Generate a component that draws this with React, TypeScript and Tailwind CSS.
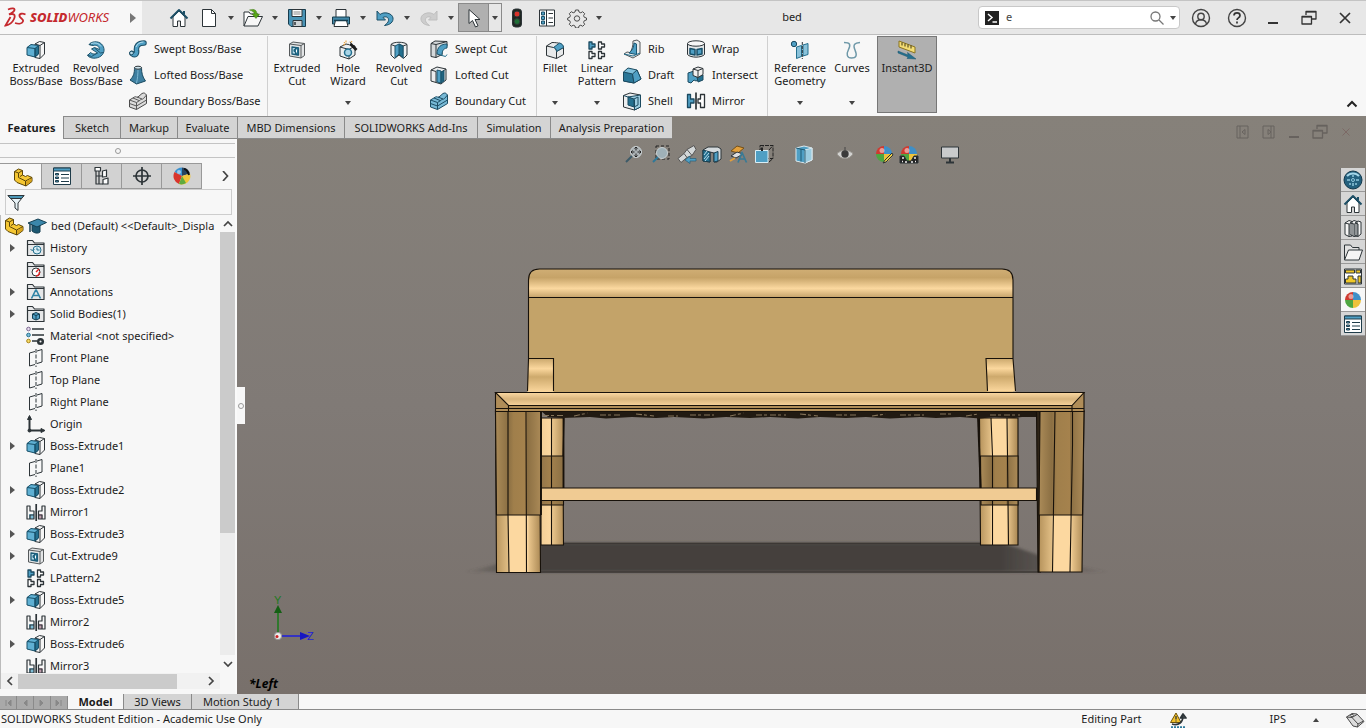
import type { ReactNode } from 'react';

const INK = '#2d3438';
const BLUE = '#4f9fc4';
const DEEP = '#24708f';

function Svg({ children, className = 'size-5', box = 20 }: { children: ReactNode; className?: string; box?: number }) {
  return (
    <svg
      viewBox={`0 0 ${box} ${box}`}
      className={`shrink-0 ${className}`}
      fill="none"
      stroke={INK}
      strokeWidth="1"
      strokeLinejoin="round"
      aria-hidden="true"
    >
      {children}
    </svg>
  );
}

/* ---------- feature icons ---------- */

const BossIcon = () => (
  <Svg>
    <path d="M9 4l4.5-2.5 5 1V14L14 18.500l-5-1z" fill="#f6f6f6" />
    <path d="M14 18.5V5.500l4.500-3M14 5.500L9 4" />
    <path d="M1 7.500l4-3 7.500 1V14L9 17l-8-2z" fill="#5fb0d3" stroke="#174f68" />
    <path d="M9 8.500l3.500-3V14L9 17z" fill={DEEP} stroke="#174f68" />
    <path d="M1 7.500l8 1V17" stroke="#174f68" />
  </Svg>
);

const CutIcon = () => (
  <Svg>
    <path d="M2.500 4L6 2l11.500 1.500v12L14 18 2.500 16z" fill="#e3e5e6" stroke="#55595b" />
    <path d="M2.500 4L14 5.500V18M14 5.500l3.500-2" stroke="#55595b" />
    <path d="M5 7l6.500 1v7L5 14z" fill="#b9dcea" stroke="#1c5c78" strokeWidth="1.300" />
    <path d="M8.500 7.500l3 .5v7l-3-.5V12L7 11.500V9.500l1.500.3z" fill={DEEP} stroke="#1c5c78" />
    <path d="M9.500 9.500v3" stroke="#fff" />
  </Svg>
);

const RevolveIcon = () => (
  <Svg>
    <path
      d="M3 4.500C5 1.500 12 .5 15.500 4s3.500 9-.5 12-10.500 3-13.500-.5l3-3c2 2 5 2 7 .5l-6-4 3-1.500 5 2c0-3-3-5-6-4z"
      fill={BLUE}
      stroke="#21566e"
    />
    <path d="M3 4.500l4.500 1M8.500 8l6 5 3-.5M1.500 15l4 1.500 6-3.500" stroke="#21566e" />
    <path d="M5 4c3-2 8-1 10 2.500" stroke="#b8e0ef" />
  </Svg>
);

const SweptIcon = () => (
  <Svg>
    <path
      d="M4 14.500c4 3 5 0 4.500-3C8 7 10 4 16 4"
      stroke="#1d4f66"
      strokeWidth="5.500"
      strokeLinecap="round"
    />
    <path d="M4 14.500c4 3 5 0 4.500-3C8 7 10 4 16 4" stroke={BLUE} strokeWidth="3.500" strokeLinecap="round" />
    <path d="M8 8c1-3 4-5 7.500-5" stroke="#b5dcec" />
    <ellipse cx="3.500" cy="14" rx="2" ry="1.700" fill="#b9dceb" stroke="#1d4f66" />
  </Svg>
);

const LoftIcon = () => (
  <Svg>
    <path d="M6.500 2.500c0 6-1 9-4.500 12.500l6.500 4 9-3c-3-4-4-8-4-13.500z" fill="#3e7fa0" stroke="#1b4a60" />
    <path d="M8.500 18c1-4 1.500-9 1.500-14" stroke="#7db9d3" />
    <ellipse cx="10" cy="2.700" rx="3.500" ry="1.500" fill="#cfe6ef" />
  </Svg>
);

const BoundaryIcon = ({ blue = false }: { blue?: boolean }) => (
  <Svg>
    <path
      d="M1.500 9l5-3c2-1 2 1 3.500 0l4-3.500c2-1 3-.5 4.500 1.500v8.500l-10 6-7-2.500z"
      fill={blue ? '#77b9d6' : '#dcdcdc'}
      stroke={blue ? '#1c4d64' : '#4a4a4a'}
    />
    <path
      d="M1.500 9l7 2.500v7M8.500 11.500l4-2.500c1-2 2 0 3-1.500l3-3.500M5 7l6 2.500M9 6l5 2M1.500 12.500L8.500 15l10-6"
      stroke={blue ? '#1c4d64' : '#5a5a5a'}
    />
  </Svg>
);

const HoleIcon = () => (
  <Svg>
    <path d="M2 7l6-3 9 2v9l-6 4-9-3z" fill="#eceff0" />
    <path d="M2 7l9 2.500V19M11 9.500L17 6" />
    <circle cx="10" cy="12.500" r="3.500" fill="#a9d5e7" stroke={DEEP} strokeWidth="1.500" />
    <path d="M11 2.500l7.500 7.500" stroke="#1c1c1c" strokeWidth="2.800" />
    <path d="M10.500 2.500L12 4" stroke="#fff" strokeWidth="2" />
    <path d="M6 2l1 1.500M8 .5v2M14 1l-1 1.500M5 5l2-.5" stroke="#e59a2e" />
  </Svg>
);

const RevolvedCutIcon = () => (
  <Svg>
    <path d="M2 4.500C4 1.500 16 1.500 18 4.500V15l-3.500 3.500L10 15l-4.500 3.500L2 15z" fill="#eef0f1" />
    <path d="M6 6l4-2 4 2v12l-4-4-4 4z" fill={BLUE} stroke="#1d546c" />
    <path d="M10 4v10l4 4V6z" fill={DEEP} stroke="#1d546c" />
    <path d="M2 4.500L6 6M18 4.500L14 6" />
  </Svg>
);

const SweptCutIcon = () => (
  <Svg>
    <path d="M2 4.500L6 2l12 .5v5c-4 1-5 3-5 8L7 18.500l-5-1z" fill="#d5d9db" />
    <path d="M2 4.500l5 1v13M7 5.500L18 2.500" />
    <path d="M18 5c-6 0-10 3-10 10l5 1.500c0-4 1-7 5-7.500z" fill={BLUE} stroke="#1d546c" />
    <path d="M13 16.500l3.500 1 1.500-2" stroke={DEEP} />
  </Svg>
);

const LoftedCutIcon = () => (
  <Svg>
    <path d="M2 5l6-3 9 2v11l-5 4-10-3z" fill="#ebeced" />
    <path d="M2 5l5 1.500v11M12 19V7.500L17 4" />
    <path d="M8 5l4 1v12l-4-1z" fill={BLUE} stroke="#1d546c" />
    <path d="M12 7l3-1.500V16l-3 2z" fill="#1f6481" stroke="#1d546c" />
  </Svg>
);

const FilletIcon = () => (
  <Svg>
    <path d="M1.500 6L7 2.500c6 0 11 1 11.500 5v7l-7 4-10-3z" fill="#e8eaeb" />
    <path d="M1.500 6l7 1.500c2 .5 3 2 3 4v7M11.500 11.500l7-4" />
    <path d="M8.500 7.500l6-4.500c2 .5 4 2 4 4.500l-7 4c0-2-1-3.500-3-4z" fill={BLUE} stroke="#1d546c" />
  </Svg>
);

const PatternIcon = () => (
  <Svg>
    <path d="M2 2h3v2h3v3H5v2H2z" fill={BLUE} stroke="#1b4a60" strokeWidth="1.300" />
    <path
      d="M11.500 2h3v2h3v3h-3v2h-3zM2 11.500h3v2h3v3H5v2H2zM11.500 11.500h3v2h3v3h-3v2h-3z"
      fill="#fff"
      strokeWidth="1.300"
    />
  </Svg>
);

const RibIcon = () => (
  <Svg>
    <path d="M11 2l4-1 3 2v12l-7 4-9-4 3-2 3 .5c2-3 3-6 3-11.500z" fill="#e9ebec" stroke="#55595b" />
    <path d="M12 4l2.500 1v10.500L7 14c3-2 5-6 5-10z" fill={BLUE} stroke="#1b5570" />
    <path d="M2 15l9 2 7-3" stroke={DEEP} />
  </Svg>
);

const DraftIcon = () => (
  <Svg>
    <path d="M1.500 7L6 3l9 2 4 9-7 4-10.500-2z" fill="#7fc0dc" stroke="#1b4a60" />
    <path d="M1.500 7l9 2 1.500 9-10.500-2z" fill="#2a7697" stroke="#1b4a60" />
    <path d="M10.500 9L15 5l4 9-7 4z" fill={BLUE} stroke="#1b4a60" />
  </Svg>
);

const ShellIcon = () => (
  <Svg>
    <path d="M1.500 4.500L8 2l10.500 2v12l-6 3-11-3z" fill="#eceeef" />
    <path d="M6 6l12.500-2v12l-6 3V9z" fill="#9dcde0" stroke="#1b4a60" />
    <path d="M6 6v8l6 2V8z" fill={DEEP} stroke="#1b4a60" />
    <path d="M1.500 4.500L6 6M12 8l4-2v8l-4 2" stroke="#1b4a60" />
  </Svg>
);

const WrapIcon = () => (
  <Svg>
    <path d="M1.500 4.500v11c3 3.500 14 3.500 17 0v-11" fill="#e4e7e8" />
    <ellipse cx="10" cy="4.500" rx="8.500" ry="2.700" fill="#f7f7f7" />
    <path d="M4 9.500l5 1v5.500l-5-1zM11 10.500l5-1V15l-5 1z" fill={BLUE} stroke="#174f68" strokeWidth="1.500" />
  </Svg>
);

const IntersectIcon = () => (
  <Svg>
    <path d="M2 8l6-2 4 2v7l-2 1-2-1-3 3-3-1z" fill={BLUE} stroke="#1b4a60" />
    <path d="M11 12l6-2v5l-5 2z" fill={DEEP} stroke="#1b4a60" />
    <path d="M7 4l5-2 5 1.500v6l-5 3-5-2z" fill="#f1f1f1" />
    <path d="M7 4l5 1.500v7M12 5.500l5-2" />
  </Svg>
);

const MirrorIcon = () => (
  <Svg>
    <path d="M1.500 3.500h3V8h3.500v4H4.500v4.500h-3z" fill={BLUE} stroke="#1b4a60" strokeWidth="1.300" />
    <path d="M10 1.500v17" strokeWidth="1.700" />
    <path d="M18.500 3.500h-4V8H12v4h2.500v4.500h4z" fill="#fff" strokeWidth="1.300" />
  </Svg>
);

const RefGeomIcon = () => (
  <Svg>
    <circle cx="4" cy="4" r="2.700" fill={BLUE} stroke="#1b4a60" />
    <path d="M6.500 7l5-1.500v11l-5 2zM13 5l5-1.500v11L13 16z" fill="#8ac2da" stroke={DEEP} />
    <path d="M12.300 2v17" strokeDasharray="3 1" />
  </Svg>
);

const CurvesIcon = () => (
  <Svg>
    <path d="M2 2.500c6 0 7 2 4.500 7S5 18 9.500 18s6-2 3.500-8 0-7 5-7.500" stroke="#6e98a8" strokeWidth="1.500" />
  </Svg>
);

const InstantIcon = () => (
  <Svg>
    <path d="M2 1l16 6v6L2 7z" fill="#f4dd74" stroke="#8a7420" />
    <path d="M5 2.500v3M8 3.500v3M11 4.500v3M14 5.500v3" stroke="#3a3311" />
    <path d="M1 11l10 4-.500-2.500L19 19l-9-.5 1-1.500-10-4z" fill={DEEP} stroke="#1d546c" strokeWidth=".5" />
  </Svg>
);

/* ---------- title bar icons ---------- */

const HomeIcon = () => (
  <Svg>
    <path d="M4 9v9.500h4.500V13h3v5.500H16V9l-6-6z" fill="#fff" />
    <path d="M1.500 10.500L10 2l8.500 8.500" stroke="#1d4f66" strokeWidth="2" />
    <path d="M15 3v3.500" stroke="#1d4f66" strokeWidth="2" />
  </Svg>
);
const NewIcon = () => (
  <Svg>
    <path d="M3.500 1.500h9l4 4v13h-13z" fill="#fff" />
    <path d="M12.500 1.500v4h4" />
  </Svg>
);
const OpenIcon = () => (
  <Svg>
    <path d="M1 18V4h5l1.500 2H15v3" fill="#fff" />
    <path d="M1 18L5 8.500h14.500L15 18z" fill="#f7f7f7" />
    <path
      d="M6.500 2c5-1.500 7 0 7.500 4h2.500L13 10.500 9 6h2.500C11 4 10 3 6.500 2z"
      fill="#58a618"
      stroke="#3b7710"
      strokeWidth=".5"
    />
  </Svg>
);
const SaveIcon = () => (
  <Svg>
    <path d="M1.500 1.500h17v17H4l-2.500-2.500z" fill="#4a94b6" stroke="#173c4d" />
    <path d="M5 1.500h10v7H5z" fill="#fff" />
    <path d="M6.500 4h7M6.500 6h7" stroke="#888" />
    <path d="M6 12.500h9v6H6z" fill="#cfd4d6" />
    <path d="M8 14v3" strokeWidth="1.500" />
  </Svg>
);
const PrintIcon = () => (
  <Svg>
    <path d="M5 9V1.500h10V9" fill="#fff" />
    <path d="M1.500 9h17v7h-17z" fill="#4388a8" stroke="#173c4d" />
    <path d="M4.500 12.500h11l1.500 6H3z" fill="#fff" />
    <path d="M3 12.500h14" stroke="#173c4d" strokeWidth="1.500" />
  </Svg>
);
const UndoIcon = ({ faded = false }: { faded?: boolean }) => (
  <Svg className={faded ? 'size-5 -scale-x-100' : 'size-5'}>
    <path
      d="M2 3v9h8.500L8 9.500c2.500-1.500 6-.5 5.500 3-.200 2-2 3.500-4 5C15 17 18.500 14 18 10 17.500 5.500 9.500 3 5 6.500z"
      fill={faded ? '#cdcdcd' : BLUE}
      stroke={faded ? '#bfbfbf' : '#1d4f66'}
    />
  </Svg>
);
const CursorIcon = () => (
  <Svg>
    <path d="M5 1.500v14l3.500-3 3 6.500 2.500-1.200-3-6.300h5z" fill="#fff" />
  </Svg>
);
const TrafficIcon = () => (
  <Svg>
    <rect x="5.500" y="1" width="9" height="18" rx="3" fill="#1d2620" />
    <circle cx="10" cy="6" r="3" fill="#d8332b" />
    <circle cx="10" cy="13.500" r="3" fill="#1f6f36" />
  </Svg>
);
const OptionsIcon = () => (
  <Svg>
    <path d="M2.500 2h15v16h-15z" fill="#fff" />
    <path d="M4.500 4h3v3h-3zM4.500 8.500h3v3h-3zM4.500 13h3v3h-3z" fill={BLUE} stroke="#1d4f66" />
    <path d="M9.500 2v16M11.500 5.500H16M11.500 10H16M11.500 14.500H16" />
  </Svg>
);
const GearIcon = () => (
  <Svg>
    <path
      d="M8.500 2h3l.5 2 1.800.8 1.900-1.100 2 2-1.100 1.900.7 1.700 2.200.7v2l-2.200.7-.7 1.700 1.100 1.900-2 2-1.900-1.100-1.800.8-.5 2h-3l-.5-2-1.800-.8-1.900 1.100-2-2 1.100-1.900-.7-1.700-2-.7v-2l2-.7.7-1.700-1.100-1.900 2-2 1.900 1.100L8 4z"
      stroke="#4b4b4b"
    />
    <circle cx="10" cy="10.500" r="2.700" stroke="#4b4b4b" />
  </Svg>
);

const RestoreIcon = () => (
  <Svg className="size-4" box={16}>
    <path d="M5 5V1.500h10V9h-4M1 6.500h9.500V14H1z" strokeWidth="1.300" stroke="currentColor" />
    <path d="M1 7h9.500M5 2h10" stroke="currentColor" />
  </Svg>
);
const MinimizeIcon = () => (
  <Svg className="size-4" box={16}>
    <path d="M3 13h10" strokeWidth="2" stroke="currentColor" />
  </Svg>
);
const CloseIcon = () => (
  <Svg className="size-4" box={16}>
    <path d="M3 3l10 10M13 3L3 13" strokeWidth="1.700" stroke="currentColor" />
  </Svg>
);

/* ---------- tree and pane icons ---------- */

const PartIcon = () => (
  <Svg>
    <path
      d="M1.500 4.500L5.500 2l4 1.500v4.500l3 1.500 2-1 4.500 2v4L13 19 4 15.500 1.500 13z"
      fill="#f5c733"
      stroke="#5c4608"
    />
    <path d="M1.500 4.500l4 1.500v4.500l7 3.500V19M5.500 6l4-2.500M12.500 14l6.500-3.500M7 9.500L9.500 8" stroke="#5c4608" />
    <path d="M13 14.500l5.500-3v3L13 18z" fill="#d9a31b" stroke="none" />
  </Svg>
);

const CapIcon = () => (
  <Svg>
    <path d="M5 9v6c2 2 6 3 8 1V9" fill="#1d5872" stroke="#153f52" />
    <path d="M1 7l10-4 8.500 3.500L10 11z" fill="#3b87ab" stroke="#153f52" />
    <path d="M3 8v8" stroke="#153f52" strokeWidth="1.500" />
  </Svg>
);

function FolderIcon({ children }: { children?: ReactNode }) {
  return (
    <Svg>
      <path d="M1.500 17.500V2.500h5l2 2.500h9.500v12.500z" fill="#e6e7e8" strokeWidth="1.200" />
      <path d="M1.500 6.500H18" />
      {children}
    </Svg>
  );
}

const HistoryIcon = () => (
  <FolderIcon>
    <circle cx="11" cy="12" r="4" fill="#d7ecf4" stroke={DEEP} />
    <path d="M11 9.500V12h2.500M4.500 11l2 2 2-2" stroke={DEEP} />
  </FolderIcon>
);
const SensorIcon = () => (
  <FolderIcon>
    <circle cx="10" cy="12" r="4" fill="#fff" />
    <path d="M10 12l3-3" stroke="#d22" strokeWidth="1.500" />
    <path d="M10 16a4 4 0 003.500-4" stroke="#d22" strokeWidth="1.500" />
  </FolderIcon>
);
const AnnotationIcon = () => (
  <FolderIcon>
    <path d="M5.500 16.500L9.700 8h.6l4.200 8.500M7 13.500h6" stroke="#2f83a5" strokeWidth="1.600" />
  </FolderIcon>
);
const BodiesIcon = () => (
  <FolderIcon>
    <path d="M6.500 10l3.500-1.500 3.500 1.500v4.500L10 16l-3.500-1.500z" fill={BLUE} stroke="#153f52" />
    <path d="M6.500 10l3.500 1.500V16M10 11.500l3.500-1.500" stroke="#153f52" />
  </FolderIcon>
);
const MaterialIcon = () => (
  <Svg>
    <circle cx="2.500" cy="3" r="1.800" fill="#e6dced" stroke="#7c6690" />
    <circle cx="2.500" cy="9" r="1.800" fill="#7cc0dc" stroke={DEEP} />
    <circle cx="2.500" cy="15" r="1.800" fill="#f6dc6a" stroke="#a98213" />
    <path d="M6 3h12M6 9h12M6 15h5" strokeWidth="1.500" />
    <circle cx="14.500" cy="15.500" r="2.300" strokeWidth="2.500" />
  </Svg>
);
const PlaneIcon = () => (
  <Svg>
    <path d="M9 3.500L3.500 5v13L9 16.500M11 3l5-1.500V14l-5 1.500" />
    <path d="M10 1v18" strokeDasharray="4 1.500" />
  </Svg>
);
const OriginIcon = () => (
  <Svg>
    <path d="M3.500 4v12.500H16" strokeWidth="2" />
    <path d="M1.500 5.500l2-4 2 4zM15 14.500l4 2-4 2z" fill={INK} />
    <circle cx="3.500" cy="16.500" r="1.500" fill={INK} />
  </Svg>
);
const TreeMirrorIcon = () => (
  <Svg>
    <path d="M3 12h5v5H3z" fill="#7fbdd6" stroke="none" />
    <path d="M12.500 12h4v5h-4z" fill="#bf9bab" stroke="none" />
    <path
      d="M1 4h3v5h4v8H1zM4 17v-4h4M19 4h-3v5h-3.500v8H19zM16 17v-4h-3.500"
      strokeWidth="1.200"
    />
    <path d="M10.200 2v17" strokeWidth="1.700" />
  </Svg>
);

const PropertyIcon = () => (
  <Svg>
    <path d="M1.500 2h17v16.500h-17z" fill="#fff" stroke="#1f3c4a" />
    <path d="M1.500 2h17v3h-17z" fill={BLUE} stroke="#1f3c4a" />
    <path d="M3.500 7.500h3v1.500h-3zM3.500 11h3v1.500h-3zM3.500 14.500h3V16h-3z" fill={BLUE} stroke="#1f3c4a" />
    <path d="M9 8.500h8M9 12h8M9 15.500h8" stroke="#1f3c4a" />
  </Svg>
);
const ConfigIcon = () => (
  <Svg>
    <path d="M3 1.500h5.500V5H3zM10.500 5l4-1v6.500l-4 .5zM11 13.500l5-1.500v6h-5z" fill="#fff" strokeWidth="1.200" />
    <path d="M4 5v13h7M4 10h6.500M7 5v13" strokeWidth="1.200" />
  </Svg>
);
const TargetIcon = () => (
  <Svg>
    <circle cx="10" cy="10" r="6" strokeWidth="1.700" />
    <path d="M10 1v18M1 10h18" strokeWidth="1.700" />
  </Svg>
);
const BallIcon = () => (
  <Svg>
    <path d="M10 10L2.500 6A8.500 8.500 0 0 1 10 1.500z" fill="#3c92d0" stroke="none" />
    <path d="M10 10V1.500A8.500 8.500 0 0 1 18 7.500z" fill="#28445f" stroke="none" />
    <path d="M10 10L2.500 6A8.500 8.500 0 0 0 7 18z" fill="#d8352c" stroke="none" />
    <path d="M10 10l8-2.500A8.500 8.500 0 0 1 7 18z" fill="#f1c63a" stroke="none" />
    <path d="M10 10l-3 8a8.500 8.500 0 0 0 7-1z" fill="#5fab3f" stroke="none" />
    <path d="M12 3c2 0 4 3 5 6" stroke="#111" strokeWidth="2" />
    <circle cx="7" cy="6" r="2" fill="#fff" fillOpacity=".5" stroke="none" />
  </Svg>
);
const SceneBallIcon = ({ children }: { children?: ReactNode }) => (
  <Svg>
    <path d="M10 10V2a8 8 0 0 0-8 8z" fill="#cf3a31" stroke="none" />
    <path d="M10 10V2a8 8 0 0 1 8 8z" fill="#3f8fc7" stroke="none" />
    <path d="M10 10H2a8 8 0 0 0 8 8z" fill="#4ea640" stroke="none" />
    <path d="M10 10h8a8 8 0 0 1-8 8z" fill="#edc23b" stroke="none" />
    <circle cx="8" cy="6.500" r="2.500" fill="#fff" fillOpacity=".5" stroke="none" />
    {children}
  </Svg>
);
const FunnelIcon = () => (
  <Svg>
    <path d="M2 3.500h16L12 11v7.500l-3-2.500v-5z" fill="#e9f3f7" />
    <path d="M2 3.500h16l-2.500 3h-11z" fill="#4b97b7" />
  </Svg>
);

/* ---------- ribbon ---------- */

function Caret({ className = '' }: { className?: string }) {
  return (
    <svg viewBox="0 0 6 4" className={`h-1 w-1.5 shrink-0 ${className}`} fill="#444" aria-hidden="true">
      <path d="M0 0h6L3 4z" />
    </svg>
  );
}

type BigProps = { icon: ReactNode; lines: string[]; width: string; menu?: boolean; active?: boolean };

function BigButton({ icon, lines, width, menu, active }: BigProps) {
  return (
    <button
      className={`flex h-[77px] flex-col items-center pt-[3px] leading-[13px] ${width} ${
        active ? 'border border-[#777] bg-[#b0b0b0]' : 'border-y border-transparent'
      }`}
    >
      {icon}
      <span className="mt-px whitespace-nowrap">
        {lines.map((line) => (
          <span key={line} className="block">
            {line}
          </span>
        ))}
      </span>
      {menu && <Caret className="mt-auto mb-[7px]" />}
    </button>
  );
}

function SmallList({ items, width = '' }: { items: [ReactNode, string][]; width?: string }) {
  return (
    <div className={`flex flex-col ${width}`}>
      {items.map(([icon, label]) => (
        <button key={label} className="flex h-[26px] items-center gap-1.5 whitespace-nowrap">
          {icon}
          {label}
        </button>
      ))}
    </div>
  );
}

function Ribbon() {
  return (
    <div className="flex h-[81px] shrink-0 bg-[#f7f7f7] pt-px">
      <div className="flex w-[268px] border-r border-[#d0d0d0] pl-1.5">
        <BigButton icon={<BossIcon />} lines={['Extruded', 'Boss/Base']} width="w-[60px]" />
        <BigButton icon={<RevolveIcon />} lines={['Revolved', 'Boss/Base']} width="w-[60px]" />
        <SmallList
          width="pl-0.5"
          items={[
            [<SweptIcon />, 'Swept Boss/Base'],
            [<LoftIcon />, 'Lofted Boss/Base'],
            [<BoundaryIcon />, 'Boundary Boss/Base'],
          ]}
        />
      </div>
      <div className="flex w-[269px] border-r border-[#d0d0d0]">
        <BigButton icon={<CutIcon />} lines={['Extruded', 'Cut']} width="w-[58px]" />
        <BigButton icon={<HoleIcon />} lines={['Hole', 'Wizard']} width="w-[44px]" menu />
        <BigButton icon={<RevolvedCutIcon />} lines={['Revolved', 'Cut']} width="w-[58px]" />
        <SmallList
          width="pl-px"
          items={[
            [<SweptCutIcon />, 'Swept Cut'],
            [<LoftedCutIcon />, 'Lofted Cut'],
            [<BoundaryIcon blue />, 'Boundary Cut'],
          ]}
        />
      </div>
      <div className="flex w-[231px] border-r border-[#d0d0d0]">
        <BigButton icon={<FilletIcon />} lines={['Fillet']} width="w-9" menu />
        <BigButton icon={<PatternIcon />} lines={['Linear', 'Pattern']} width="w-12" menu />
        <SmallList
          width="w-[65px] pl-px"
          items={[
            [<RibIcon />, 'Rib'],
            [<DraftIcon />, 'Draft'],
            [<ShellIcon />, 'Shell'],
          ]}
        />
        <SmallList
          items={[
            [<WrapIcon />, 'Wrap'],
            [<IntersectIcon />, 'Intersect'],
            [<MirrorIcon />, 'Mirror'],
          ]}
        />
      </div>
      <div className="flex">
        <BigButton icon={<RefGeomIcon />} lines={['Reference', 'Geometry']} width="w-16" menu />
        <BigButton icon={<CurvesIcon />} lines={['Curves']} width="mr-[5px] w-10" menu />
        <BigButton icon={<InstantIcon />} lines={['Instant3D']} width="w-[60px]" active />
      </div>
      <button aria-label="Collapse ribbon" className="mr-2 mb-2 ml-auto self-end">
        <svg viewBox="0 0 12 8" className="h-2 w-3" fill="none" stroke="#222" strokeWidth="2" aria-hidden="true">
          <path d="M1.500 6.500L6 2l4.500 4.500" />
        </svg>
      </button>
    </div>
  );
}

/* ---------- title bar ---------- */

function ToolWithMenu({ label, icon }: { label: string; icon: ReactNode }) {
  return (
    <div className="flex h-full w-11">
      <button aria-label={label} className="flex w-[30px] items-center justify-center">
        {icon}
      </button>
      <button aria-label={`${label} menu`} className="flex w-3.5 items-center justify-center">
        <Caret />
      </button>
    </div>
  );
}

type IconButtonProps = { label: string; children: ReactNode; className?: string };

function IconButton({ label, children, className = 'w-[30px]' }: IconButtonProps) {
  return (
    <button aria-label={label} className={`flex items-center justify-center ${className}`}>
      {children}
    </button>
  );
}

function TitleBar() {
  return (
    <header className="flex h-[35px] shrink-0 items-stretch border-t border-b border-t-[#c4c4c4] border-b-[#bdbdbd] bg-[#e7e7e7]">
      <div className="flex w-[142px] items-center bg-[#f7f7f7] pl-1">
        <svg viewBox="0 0 24 24" className="size-6" fill="none" stroke="#c5292e" strokeWidth="1.800" aria-hidden="true">
          <path d="M4 3.500c4-1.800 7-1.500 6.500.5S7 7.500 5 8.500" />
          <path d="M5 8.500c4.500-1.300 7 0 5 4.500S5 19 1.500 19.500L6.500 11" />
          <path d="M21.500 8.500c-3-1.500-6.500-1-6 1.500s4.500 3 3.500 5.500-5 2.500-8 1.500" />
        </svg>
        <span className="ml-0.5 text-[13px] text-[#c5292e] italic">
          <span className="font-extrabold">SOLID</span>WORKS
        </span>
        <button aria-label="Show menu" className="mr-1.5 ml-auto">
          <svg viewBox="0 0 6 10" className="h-2.5 w-1.5" fill="#777" aria-hidden="true">
            <path d="M0 0l6 5-6 5z" />
          </svg>
        </button>
      </div>
      <IconButton label="Home" className="ml-[22px] w-[30px]">
        <HomeIcon />
      </IconButton>
      <ToolWithMenu label="New" icon={<NewIcon />} />
      <ToolWithMenu label="Open" icon={<OpenIcon />} />
      <ToolWithMenu label="Save" icon={<SaveIcon />} />
      <ToolWithMenu label="Print" icon={<PrintIcon />} />
      <ToolWithMenu label="Undo" icon={<UndoIcon />} />
      <ToolWithMenu label="Redo" icon={<UndoIcon faded />} />
      <div className="my-0.5 flex w-11 border border-[#8a8a8a]">
        <IconButton label="Select" className="w-[30px] border-r border-[#8a8a8a] bg-[#b0b0b0]">
          <CursorIcon />
        </IconButton>
        <IconButton label="Select menu" className="flex-1">
          <Caret />
        </IconButton>
      </div>
      <IconButton label="Rebuild">
        <TrafficIcon />
      </IconButton>
      <IconButton label="File properties">
        <OptionsIcon />
      </IconButton>
      <ToolWithMenu label="Options" icon={<GearIcon />} />
      <h1 className="flex-1 self-center text-center">bed</h1>
      <div className="my-[5px] flex w-[202px] items-center rounded-sm border border-[#c8c8c8] bg-white pr-[3px] pl-1.5">
        <svg viewBox="0 0 14 14" className="size-3.5 shrink-0" fill="none" stroke="#fff" strokeWidth="1.500" aria-hidden="true">
          <path d="M0 0h14v14H0z" fill="#222" stroke="none" />
          <path d="M3 3l4 3.500L3 10M7.500 11H12" />
        </svg>
        <input
          aria-label="Search commands"
          defaultValue="e"
          className="min-w-0 flex-1 bg-transparent pl-[7px] text-[#444] outline-none"
        />
        <svg viewBox="0 0 14 14" className="size-3.5 shrink-0" fill="none" stroke="#777" strokeWidth="1.300" aria-hidden="true">
          <circle cx="5.500" cy="5.500" r="4.500" />
          <path d="M9 9l4.500 4.500" />
        </svg>
        <Caret className="ml-1.5" />
      </div>
      <div className="flex pr-[3px] pl-[3px] text-[#333]">
        <IconButton label="Account" className="w-9">
          <Svg>
            <circle cx="10" cy="10" r="8.500" stroke="#444" strokeWidth="1.400" />
            <circle cx="10" cy="8.500" r="3.200" stroke="#444" strokeWidth="1.400" />
            <path d="M4.500 16c.5-3 3-4.300 5.500-4.300s5 1.300 5.500 4.300" stroke="#444" strokeWidth="1.400" />
          </Svg>
        </IconButton>
        <IconButton label="Help" className="w-9">
          <Svg>
            <circle cx="10" cy="10" r="8.500" stroke="#444" strokeWidth="1.400" />
            <path d="M7 7.500C7 4 13 4 13 7.500c0 2.500-3 2.300-3 4.500M10 13.500v2" stroke="#333" strokeWidth="1.700" />
          </Svg>
        </IconButton>
        <IconButton label="Minimize" className="w-9">
          <MinimizeIcon />
        </IconButton>
        <IconButton label="Restore" className="w-9">
          <RestoreIcon />
        </IconButton>
        <IconButton label="Close" className="w-9">
          <CloseIcon />
        </IconButton>
      </div>
    </header>
  );
}

/* ---------- command tabs ---------- */

const commandTabs = [
  { label: 'Sketch', width: 'w-[57px]' },
  { label: 'Markup', width: 'w-[57px]' },
  { label: 'Evaluate', width: 'w-[60px]' },
  { label: 'MBD Dimensions', width: 'w-[107px]' },
  { label: 'SOLIDWORKS Add-Ins', width: 'w-[133px]' },
  { label: 'Simulation', width: 'w-[73px]' },
  { label: 'Analysis Preparation', width: 'w-[122px]' },
];

function CommandTabs() {
  return (
    <div className="flex h-[23px] shrink-0">
      <button className="w-[63px] bg-[#f7f7f7] pt-0.5 font-bold">Features</button>
      {commandTabs.map((tab) => (
        <button
          key={tab.label}
          className={`border-t border-b border-l border-[#8a8a8a] bg-[#d4d4d4] pt-0.5 whitespace-nowrap ${tab.width}`}
        >
          {tab.label}
        </button>
      ))}
      <div className="mt-2 ml-auto flex gap-[2px] pr-2 text-[#67625e]">
        <IconButton label="Dock left" className="w-6">
          <Svg className="size-4" box={16}>
            <path d="M3 2h11v12H3zM6 2v12M11 5.500L8 8l3 2.500z" stroke="#67625e" />
          </Svg>
        </IconButton>
        <IconButton label="Dock right" className="w-6">
          <Svg className="size-4" box={16}>
            <path d="M3 2h11v12H3zM11 2v12M8 5.500L11 8l-3 2.500z" stroke="#67625e" />
          </Svg>
        </IconButton>
        <IconButton label="Minimize document" className="w-6">
          <MinimizeIcon />
        </IconButton>
        <IconButton label="Restore document" className="w-6">
          <RestoreIcon />
        </IconButton>
        <IconButton label="Close document" className="w-6 text-[#7c6965]">
          <Svg className="size-4" box={16}>
            <path d="M4.500 4.500l7 7M11.500 4.500l-7 7" stroke="currentColor" />
          </Svg>
        </IconButton>
      </div>
    </div>
  );
}

/* ---------- feature tree ---------- */

type Node = { label: string; icon: ReactNode; open?: boolean };

const nodes: Node[] = [
  { label: 'History', icon: <HistoryIcon />, open: true },
  { label: 'Sensors', icon: <SensorIcon /> },
  { label: 'Annotations', icon: <AnnotationIcon />, open: true },
  { label: 'Solid Bodies(1)', icon: <BodiesIcon />, open: true },
  { label: 'Material <not specified>', icon: <MaterialIcon /> },
  { label: 'Front Plane', icon: <PlaneIcon /> },
  { label: 'Top Plane', icon: <PlaneIcon /> },
  { label: 'Right Plane', icon: <PlaneIcon /> },
  { label: 'Origin', icon: <OriginIcon /> },
  { label: 'Boss-Extrude1', icon: <BossIcon />, open: true },
  { label: 'Plane1', icon: <PlaneIcon /> },
  { label: 'Boss-Extrude2', icon: <BossIcon />, open: true },
  { label: 'Mirror1', icon: <TreeMirrorIcon /> },
  { label: 'Boss-Extrude3', icon: <BossIcon />, open: true },
  { label: 'Cut-Extrude9', icon: <CutIcon />, open: true },
  { label: 'LPattern2', icon: <PatternIcon /> },
  { label: 'Boss-Extrude5', icon: <BossIcon />, open: true },
  { label: 'Mirror2', icon: <TreeMirrorIcon /> },
  { label: 'Boss-Extrude6', icon: <BossIcon />, open: true },
  { label: 'Mirror3', icon: <TreeMirrorIcon /> },
];

function Chevron({ d }: { d: string }) {
  return (
    <svg viewBox="0 0 10 10" className="size-2.5" fill="none" stroke="#444" strokeWidth="1.700" aria-hidden="true">
      <path d={d} />
    </svg>
  );
}

const paneTabs: [string, ReactNode][] = [
  ['Property manager', <PropertyIcon />],
  ['Configurations', <ConfigIcon />],
  ['DimXpert', <TargetIcon />],
  ['Display manager', <BallIcon />],
];

function FeaturePanel() {
  return (
    <aside className="flex w-[237px] shrink-0 flex-col border-r-2 border-[#fafafa] bg-[#f7f7f7]">
      <div className="mt-1 flex h-[15px] shrink-0 items-center justify-center border-y border-[#c4c4c4]">
        <span className="size-1.5 rounded-full border border-[#999]" />
      </div>
      <div className="mt-[5px] flex h-[26px] shrink-0">
        <button
          aria-label="Feature tree"
          className="flex w-[42px] items-center justify-center border-t border-r border-[#999] pl-1"
        >
          <PartIcon />
        </button>
        {paneTabs.map(([label, icon]) => (
          <button
            key={label}
            aria-label={label}
            className="flex w-10 items-center justify-center border border-l-0 border-[#999] bg-[#d2d2d2]"
          >
            {icon}
          </button>
        ))}
        <button aria-label="More tabs" className="mr-[5px] ml-auto">
          <Chevron d="M3 0l4.500 5L3 10" />
        </button>
      </div>
      <label className="mr-[3px] ml-[5px] flex h-[26px] shrink-0 items-center border border-[#cdcdcd]">
        <FunnelIcon />
        <input aria-label="Filter tree" className="min-w-0 flex-1 bg-transparent outline-none" />
      </label>
      <div className="flex min-h-0 flex-1 border-l border-[#bbb]">
        <div className="min-w-0 flex-1 overflow-hidden">
          <div className="flex h-[22px] items-center pl-[3px]">
            <PartIcon />
            <span className="ml-[3px] flex">
              <CapIcon />
            </span>
            <span className="ml-1 whitespace-nowrap">{'bed (Default) <<Default>_Displa'}</span>
          </div>
          <ul>
            {nodes.map((node) => (
              <li key={node.label} className="flex h-[22px] items-center pl-[9px]">
                <span className="flex w-4 shrink-0">
                  {node.open && (
                    <button aria-label={`Expand ${node.label}`}>
                      <svg viewBox="0 0 5 8" className="h-2 w-[5px]" fill="#555" aria-hidden="true">
                        <path d="M0 0l5 4-5 4z" />
                      </svg>
                    </button>
                  )}
                </span>
                {node.icon}
                <span className="ml-1 whitespace-nowrap">{node.label}</span>
              </li>
            ))}
          </ul>
        </div>
        <div className="flex w-[15px] shrink-0 flex-col items-center bg-[#ececec]">
          <div className="flex h-[17px] w-full items-center justify-center bg-[#f7f7f7]">
            <Chevron d="M1 7l4-4 4 4" />
          </div>
          <div className="h-[301px] w-full bg-[#cbcbcb]" />
          <div className="mt-auto flex h-[18px] w-full items-center justify-center bg-[#f7f7f7]">
            <Chevron d="M1 3l4 4 4-4" />
          </div>
        </div>
      </div>
      <div className="mr-[15px] flex h-4 shrink-0 items-center border-l border-[#bbb] bg-[#f1f1f1]">
        <span className="flex w-[17px] justify-center">
          <Chevron d="M7 1L3 5l4 4" />
        </span>
        <span className="h-[15px] w-[159px] bg-[#cbcbcb]" />
        <span className="mr-1 ml-auto">
          <Chevron d="M3 1l4 4-4 4" />
        </span>
      </div>
      <div className="h-[5px] shrink-0" />
    </aside>
  );
}

/* ---------- graphics area ---------- */

const viewTools: [string, ReactNode, string][] = [
  [
    'Zoom to fit',
    <Svg>
      <circle cx="12" cy="8" r="5.500" fill="#aab1b4" stroke="#c9d0d2" />
      <path
        d="M12 3v3.500M12 9.500V13M7 8h3.500M13.500 8H17M10.500 4.500L12 3l1.500 1.500M10.500 11.500L12 13l1.500-1.500M8.500 6.500L7 8l1.500 1.500M15.500 6.500L17 8l-1.500 1.500"
        stroke="#222"
      />
      <path d="M8 12l-6 6" stroke="#3d5a68" strokeWidth="2" />
    </Svg>,
    '',
  ],
  [
    'Zoom to area',
    <Svg>
      <path d="M5 2h13v13H5z" strokeDasharray="3 2" stroke="#222" />
      <circle cx="11" cy="9" r="5.500" fill="#9fb1b8" stroke="#c9d0d2" />
      <path d="M7 13l-5 5" stroke="#2f7898" strokeWidth="2" />
    </Svg>,
    'ml-[7px]',
  ],
  [
    'Previous view',
    <Svg>
      <path d="M17 1.500l-7 4-3 4-6 5 3 4 6-5 5-2 4-6z" fill="#d3d7d8" stroke="#555" />
      <path d="M7 9.500l3 4M10 5.500l5 6" stroke="#555" />
      <path d="M19 14.500h-6v-2.500l-5 4 5 3.500v-2.500h6z" fill={BLUE} stroke="#285f78" strokeWidth=".7" />
    </Svg>,
    'ml-1.5',
  ],
  [
    'Section view',
    <Svg>
      <path d="M1 6l5-3h10l3 2v10l-4 3h-3V9L8 8v10l-7-1z" fill="#d4dadd" />
      <path d="M1 6l7 2v10l-7-1z" fill={DEEP} stroke="#183f50" />
      <path d="M12 9l4-1.500V17l-4 1z" fill={BLUE} stroke="#183f50" />
      <path d="M2 15l5-6M2 11l3-4M3 17l4-5" stroke="#b9dceb" />
    </Svg>,
    'ml-[5px]',
  ],
  [
    'Dynamic annotation views',
    <Svg>
      <path d="M3 7l6-5 7 2-6 5z" fill="#e2a03c" stroke="#74501a" />
      <path d="M3 12l6-4 6 2-7 4z" fill="#ddd" />
      <path d="M10 18.500l4-10 4.500 10M11.500 15h6" stroke="#387a96" strokeWidth="1.700" />
      <path d="M2 17l5-3" stroke="#e2a03c" strokeWidth="2" />
    </Svg>,
    'ml-1.5',
  ],
  [
    'View orientation',
    <Svg>
      <path d="M6 1.500h13v13H6zM6 5.500L10 1.500M15 6l4-4.500M15 18l4-3.500" stroke="#222" strokeDasharray="4 1" />
      <path d="M1.500 6.500h12.500V18.500H1.500z" fill={BLUE} stroke="#d9eef6" />
      <path d="M8 4v3" stroke="#222" strokeWidth="2" />
    </Svg>,
    'ml-1.5',
  ],
  [
    'Display style',
    <Svg>
      <path d="M2 4l8-2 8 2v12l-7 3-9-2z" fill={BLUE} stroke="#dce9ee" />
      <path d="M11 6l7-2v12l-7 3z" fill="#9acbdf" stroke="#dce9ee" />
      <path d="M2 4l9 2v13M7 5v12.500" stroke="#1f5a73" />
    </Svg>,
    'ml-5',
  ],
  [
    'Hide or show items',
    <Svg>
      <path d="M2 10c4-5 12-5 16 0-4 6-12 6-16 0z" fill="#d2d2d0" stroke="#9b9892" />
      <circle cx="10" cy="10" r="3.700" fill="#3b3b3b" stroke="none" />
      <path d="M10 3v5" stroke="#444" />
    </Svg>,
    'ml-[21px]',
  ],
  [
    'Edit appearance',
    <SceneBallIcon>
      <path d="M18 9l-7 7-2 3 3-1 7-7z" fill="#f1cf45" />
    </SceneBallIcon>,
    'ml-[19px]',
  ],
  [
    'Apply scene',
    <SceneBallIcon>
      <path d="M1 12h4l3 5h4l3-5h4v7H1z" fill="#222" />
      <path d="M3 14h2M6 18h2M12 18h2M15 14h2M3 17.500h1M16 17.500h1" stroke="#eee" strokeWidth="1.500" />
    </SceneBallIcon>,
    'ml-[5px]',
  ],
  [
    'View settings',
    <Svg>
      <path d="M1.500 3h17v11h-17z" fill="#c9cbcc" />
      <path d="M10 14v4M6 18.500h8" strokeWidth="2" />
    </Svg>,
    'ml-[21px]',
  ],
];

function ViewToolbar() {
  return (
    <div className="absolute inset-x-0 top-[5px] flex justify-center pr-5">
      {viewTools.map(([label, icon, gap]) => (
        <button key={label} aria-label={label} className={gap}>
          {icon}
        </button>
      ))}
    </div>
  );
}

function BedDrawing() {
  return (
    <svg
      viewBox="237 139 1129 555"
      preserveAspectRatio="xMidYMid slice"
      className="absolute inset-0 size-full"
      fill="none"
      stroke="#17110a"
      strokeWidth="1.100"
      role="img"
      aria-label="Bed model, left view"
    >
      <defs>
        <linearGradient id="rail" x1="0" y1="0" x2="0" y2="1">
          <stop offset="0" stopColor="#d0ae75" />
          <stop offset=".3" stopColor="#c6a368" />
          <stop offset=".68" stopColor="#fbd89f" />
          <stop offset="1" stopColor="#c5a36b" />
        </linearGradient>
        <linearGradient id="post" x1="0" y1="0" x2="0" y2="1">
          <stop offset="0" stopColor="#cba86d" />
          <stop offset=".3" stopColor="#fbd79d" />
          <stop offset=".55" stopColor="#cda96c" />
          <stop offset="1" stopColor="#fbd79d" />
        </linearGradient>
        <linearGradient id="seat" x1="0" y1="0" x2="0" y2="1">
          <stop offset="0" stopColor="#fbd9a3" />
          <stop offset=".5" stopColor="#d9b57d" />
          <stop offset="1" stopColor="#f6d199" />
        </linearGradient>
        <linearGradient id="dark">
          <stop offset="0" stopColor="#ab8b58" />
          <stop offset=".28" stopColor="#8b6f43" />
          <stop offset=".4" stopColor="#a07f4b" />
          <stop offset=".68" stopColor="#a5824d" />
          <stop offset=".7" stopColor="#8b6f43" />
          <stop offset="1" stopColor="#ab8a57" />
        </linearGradient>
        <linearGradient id="light">
          <stop offset="0" stopColor="#b6935c" />
          <stop offset=".28" stopColor="#e0bd84" />
          <stop offset=".3" stopColor="#fcd8a0" />
          <stop offset=".7" stopColor="#fcd8a0" />
          <stop offset=".75" stopColor="#e4c087" />
          <stop offset="1" stopColor="#a98753" />
        </linearGradient>
        <linearGradient id="backDark">
          <stop offset="0" stopColor="#94764a" />
          <stop offset=".45" stopColor="#a5824d" />
          <stop offset=".5" stopColor="#a07f4d" />
          <stop offset="1" stopColor="#8b6f43" />
        </linearGradient>
        <linearGradient id="backLight">
          <stop offset="0" stopColor="#f3cf97" />
          <stop offset=".45" stopColor="#fcd8a0" />
          <stop offset=".5" stopColor="#e8c48b" />
          <stop offset="1" stopColor="#b08d58" />
        </linearGradient>
        <linearGradient id="shadow">
          <stop offset="0" stopColor="#45413e" stopOpacity="0" />
          <stop offset=".12" stopColor="#45413e" />
          <stop offset=".83" stopColor="#45413e" />
          <stop offset="1" stopColor="#45413e" stopOpacity="0" />
        </linearGradient>
        <filter id="soft" x="-5%" y="-30%" width="110%" height="160%">
          <feGaussianBlur stdDeviation="1.500" />
        </filter>
      </defs>

      <path
        d="M540 543h460c25 5 55 22 112 29H462c20-3 40-9 50-14z"
        fill="url(#shadow)"
        stroke="none"
        filter="url(#soft)"
      />
      <path d="M564 543.500h417M541 572h498" stroke="#3c3835" strokeWidth="1.500" />

      {/* headboard */}
      <path d="M528.500 392V280q0-11 11-11H1002q11 0 11 11v112z" fill="#c3a369" stroke="none" />
      <path d="M528.500 297.500V280q0-11 11-11H1002q11 0 11 11v17.500z" fill="url(#rail)" />
      <path d="M528.500 358v-60M1013 298v60" />
      <path d="M528.500 358.500h25V392h-26z" fill="url(#post)" stroke="none" />
      <path d="M527.500 391l1-32.500h25V391" />
      <path d="M986.500 358.500h26.500l2.500 33h-28z" fill="url(#post)" stroke="none" />
      <path d="M987.500 391l-1.500-32.500h27l2.500 32.500" />

      {/* back legs */}
      <path d="M541 418h23l-1 38 .500 89H541z" fill="url(#backLight)" />
      <path d="M541 456h22.500v49H541z" fill="url(#backDark)" />
      <path d="M551.500 418v127" />
      <path d="M563.500 418v70" strokeWidth="1.800" />
      <path d="M979.500 418h38.500v127h-37.500z" fill="url(#light)" />
      <path d="M980.500 456H1018v49h-37z" fill="url(#dark)" />
      <path d="M991 418l1.500 38v89M1007 418l.500 38 1 89" />
      <path d="M978 418l3 80" strokeWidth="1.800" />

      {/* webbing below the seat */}
      <path
        d="M541 411h499v6h-18l-8 1-20-1-14 1.500-20-1.500-24 1-16-1-30 1.500-24-1.500-20 1-26-1-22 1.500-28-1.500-20 1-24-1-22 1.500-30-1.500-18 1-24-1-26 1.500-16-1.500-28 1-14-1z"
        fill="#211a12"
        stroke="none"
      />
      <path
        d="M543 415.500h20M574 416l14-3M600 415h22M636 414l18 2M668 416h10M690 415h24M730 416l14-3M756 415h30M800 414l18 2M836 415h22M872 416l14-2M900 415h24M940 414h14M966 416l12-2M990 415h30"
        stroke="#85745a"
        strokeDasharray="6 2 3 3"
      />

      {/* stretcher */}
      <path d="M541 488h495.500v12.500H541z" fill="#f0cb93" />

      {/* front legs */}
      <path d="M495.500 411H541l-1 80 .500 81.500H496.500z" fill="url(#light)" />
      <path d="M495.500 411H541l-.500 104h-44z" fill="url(#dark)" />
      <path d="M508 405v110l1 57M526 411l.500 161" />
      <path d="M541 411v104" strokeWidth="1.800" />
      <path d="M1036.500 411h4v161h-2.500z" fill="#2e2417" />
      <path d="M1040 411h44l-2 161h-43z" fill="url(#light)" />
      <path d="M1040 411h44l-1.500 104H1039z" fill="url(#dark)" />
      <path d="M1055 411l-2.500 161M1072.500 405v40l-2.500 127" />

      {/* seat */}
      <path d="M495.500 392.500H1084v19H495.500z" fill="#b08d58" />
      <path d="M495.500 392.500H1084l-12 13H508.500z" fill="url(#seat)" />
      <path d="M508.500 405.500v6M1072 405.500v6M495.500 408.500H1084" />

      {/* view triad */}
      <path d="M278 636v-27" stroke="#1e7a1e" strokeWidth="1.600" />
      <path d="M274 613l4-8 4 8z" fill="#145f14" stroke="none" />
      <path d="M278 636h24" stroke="#2222d8" strokeWidth="1.600" />
      <path d="M300 632l10 4-10 4z" fill="#1616c4" stroke="none" />
      <circle cx="278" cy="636" r="3.500" fill="#eee" stroke="#999" />
      <circle cx="277" cy="636.500" r="1.500" fill="#c22" stroke="none" />
      <g className="font-['Liberation_Sans'] text-[11px]" stroke="none">
        <text x="274" y="604" fill="#1e7a1e">
          Y
        </text>
        <text x="307" y="640" fill="#2222d8">
          Z
        </text>
      </g>
    </svg>
  );
}

const taskButtons: [string, ReactNode][] = [
  [
    '3DEXPERIENCE',
    <Svg>
      <circle cx="10" cy="10" r="9" fill="#23607e" stroke="#12384c" />
      <path d="M4 6c3-3.500 9-3.500 12 0" stroke="#a5d6e9" strokeWidth="2" />
      <path d="M4 10h3M13 10h3M10 5v2M10 13v3M6 14h2M12 14h2" stroke="#8fc6dd" strokeWidth="1.500" />
      <circle cx="10" cy="10" r="1.500" stroke="#8fc6dd" />
    </Svg>,
  ],
  ['Resources', <HomeIcon />],
  [
    'Design library',
    <Svg>
      <path d="M2 5l4-2.500 3 1V18l-3 .5-4-2zM7 5l4-2.500 3 1V18l-3 .5-4-2zM12 5l3-2 3 1v12l-3 2.500-3-1z" fill="#f5f5f5" />
      <path d="M2 5l4 1v12.500M7 5l4 1v12.500M12 5l3 1v12.500" />
    </Svg>,
  ],
  [
    'File explorer',
    <Svg>
      <path d="M1.500 18V3h6l2 2.500H16V8" fill="#e2e2e2" />
      <path d="M1.500 18l4-10h14L16 18z" fill="#f5f5f5" />
    </Svg>,
  ],
  [
    'View palette',
    <Svg>
      <path d="M1.500 3h17v15h-17z" fill="#fff" />
      <path d="M2.500 4h9v3h-9zM13 4h4.500v3H13zM5 10h5v3h3v4H2.500v-4H5zM15 10h3v7h-3z" fill="#f0c829" />
    </Svg>,
  ],
  ['Appearances', <SceneBallIcon />],
  ['Custom properties', <PropertyIcon />],
];

function GraphicsArea() {
  return (
    <main className="relative flex min-w-0 flex-1 flex-col">
      <BedDrawing />
      <ViewToolbar />
      <div className="absolute top-[248px] left-0 flex h-[37px] w-2 items-center justify-center bg-[#f7f7f7]">
        <span className="size-1.5 rounded-full border border-[#999]" />
      </div>
      <div className="relative mt-[29px] mr-px flex flex-col self-end border-l border-[#777]">
        {taskButtons.map(([label, icon]) => (
          <button
            key={label}
            aria-label={label}
            className={`flex h-6 w-6 items-center justify-center border-b border-[#999] ${
              label === 'Appearances' ? 'bg-[#f7f7f7]' : 'bg-[#d6d6d6]'
            }`}
          >
            {icon}
          </button>
        ))}
      </div>
      <p className="relative mt-auto pl-3 text-[12px] leading-5 font-bold text-black italic">*Left</p>
    </main>
  );
}

/* ---------- bottom ---------- */

const tabArrows: [string, string][] = [
  ['First tab', 'M3 2v6M8 2L5 5l3 3z'],
  ['Previous tab', 'M7 2L4 5l3 3z'],
  ['Next tab', 'M3 2l3 3-3 3z'],
  ['Last tab', 'M2 2l3 3-3 3zM7 2v6'],
];

function BottomBars() {
  return (
    <footer className="shrink-0 bg-[#f7f7f7]">
      <div className="flex h-4 border-b border-[#8a8a8a] leading-[14px]">
        <div className="flex w-[68px] pt-0.5">
          {tabArrows.map(([label, d]) => (
            <button
              key={label}
              aria-label={label}
              className="flex w-[17px] items-center justify-center border-r border-[#8a8a8a] bg-[#a9a9a9]"
            >
              <svg viewBox="0 0 10 10" className="size-2.5" fill="#888" stroke="#888" aria-hidden="true">
                <path d={d} />
              </svg>
            </button>
          ))}
        </div>
        <button className="w-[55px] font-bold">Model</button>
        <button className="w-[68px] border-l border-[#8a8a8a] bg-[#d4d4d4]">3D Views</button>
        <button className="w-[108px] border-x border-[#8a8a8a] bg-[#d4d4d4] pr-1.5">Motion Study 1</button>
      </div>
      <div className="flex h-[18px] items-center pt-px">
        <span className="pl-px">SOLIDWORKS Student Edition - Academic Use Only</span>
        <span className="ml-auto">Editing Part</span>
        <span className="ml-[26px] flex">
          <Svg>
            <path d="M2.500 12.500L8 3l5 9.500z" fill="#f3c22b" stroke="#6d5208" />
            <path d="M8 6v3.500M8 10.500v1" strokeWidth="1.300" />
            <path d="M4 14c7 2 11-2 11-8M12.500 8L15 4l3 4z" strokeWidth="1.700" />
            <path d="M3 17.500h14" stroke="#2d7a9c" strokeWidth="2.500" strokeDasharray="2 1" />
          </Svg>
        </span>
        <span className="ml-[82px]">IPS</span>
        <button aria-label="Unit system" className="ml-[27px] rotate-180">
          <Caret />
        </button>
        <button aria-label="Tags" className="ml-[26px] mr-px">
          <Svg>
            <path d="M1.500 7L7 3.500l5 .5 7 7.500-6.500 5.500-4.500-1z" fill="#dcdcdc" stroke="#4a4a4a" />
            <path d="M1.500 7l5.500.5 6 6.500-.5 3M13 14l5.500-3M7 7.500l5-3" stroke="#4a4a4a" />
            <ellipse cx="7" cy="5.500" rx="1.700" ry="1" fill="#fff" stroke="#4a4a4a" />
          </Svg>
        </button>
      </div>
    </footer>
  );
}

export default function App() {
  return (
    <div className="flex h-screen flex-col overflow-hidden bg-[#f7f7f7] font-['Noto_Sans','Open_Sans',sans-serif] text-[11px] text-[#1c1c1c]">
      <TitleBar />
      <Ribbon />
      <div className="flex min-h-0 flex-1 flex-col bg-linear-to-b from-[#86817a] via-[#807a76] to-[#78706b]">
        <CommandTabs />
        <div className="flex min-h-0 flex-1">
          <FeaturePanel />
          <GraphicsArea />
        </div>
      </div>
      <BottomBars />
    </div>
  );
}
